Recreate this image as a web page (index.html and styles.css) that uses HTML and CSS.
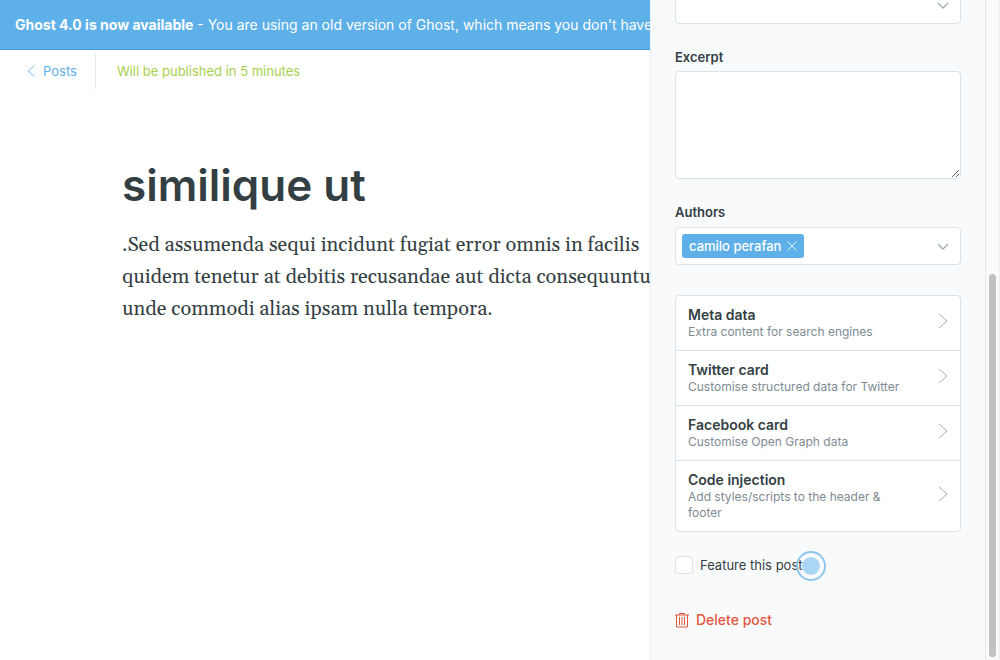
FILE: index.html
```html
<!DOCTYPE html>
<html lang="en">
<head>
<meta charset="utf-8">
<title>Edit post</title>
<link rel="stylesheet" href="styles.css">
</head>
<body>
<div class="app">
  <main class="editor">
    <aside class="alert"><strong>Ghost 4.0 is now available</strong> - You are using an old version of Ghost, which means you don't have</aside>
    <header class="toolbar">
      <a class="back" href="#">
        <svg class="back-icon" viewBox="0 0 8 12" aria-hidden="true"><path d="M7.500.5 1 6l6.500 5.500"/></svg>Posts</a>
      <span class="status">Will be published in 5 minutes</span>
    </header>
    <article class="post">
      <h1 class="post-title">similique ut</h1>
      <p class="post-body">.Sed assumenda sequi incidunt fugiat error omnis in facilis<br>quidem tenetur at debitis recusandae aut dicta consequuntur<br>unde commodi alias ipsam nulla tempora.</p>
    </article>
  </main>
  <section class="settings" aria-label="Post settings">
    <form class="settings-form">
      <button class="picker picker-tags" type="button" aria-label="Tags">
        <svg class="chevron-down" viewBox="0 0 12 7" aria-hidden="true"><path d="m1 1 5 5 5-5"/></svg>
      </button>
      <label class="label" for="excerpt">Excerpt</label>
      <textarea class="excerpt" id="excerpt"></textarea>
      <span class="label" id="authors-label">Authors</span>
      <div class="picker" role="group" aria-labelledby="authors-label">
        <span class="token">camilo perafan
          <button class="token-remove" type="button" aria-label="Remove author"><svg viewBox="0 0 10 10" aria-hidden="true"><path d="m.5.5 9 9m0-9-9 9"/></svg></button>
        </span>
        <svg class="chevron-down" viewBox="0 0 12 7" aria-hidden="true"><path d="m1 1 5 5 5-5"/></svg>
      </div>
      <ul class="nav">
        <li><button class="nav-item" type="button"><span class="nav-text"><b>Meta data</b><span>Extra content for search engines</span></span><svg class="chevron-right" viewBox="0 0 10 16" aria-hidden="true"><path d="m1 1 8 7-8 7"/></svg></button></li>
        <li><button class="nav-item" type="button"><span class="nav-text"><b>Twitter card</b><span>Customise structured data for Twitter</span></span><svg class="chevron-right" viewBox="0 0 10 16" aria-hidden="true"><path d="m1 1 8 7-8 7"/></svg></button></li>
        <li><button class="nav-item" type="button"><span class="nav-text"><b>Facebook card</b><span>Customise Open Graph data</span></span><svg class="chevron-right" viewBox="0 0 10 16" aria-hidden="true"><path d="m1 1 8 7-8 7"/></svg></button></li>
        <li><button class="nav-item" type="button"><span class="nav-text"><b>Code injection</b><span>Add styles/scripts to the header &amp; footer</span></span><svg class="chevron-right" viewBox="0 0 10 16" aria-hidden="true"><path d="m1 1 8 7-8 7"/></svg></button></li>
      </ul>
      <div class="feature">
        <input class="checkbox" type="checkbox" id="featured">
        <label for="featured">Feature this post</label>
        <span class="pointer" aria-hidden="true"></span>
      </div>
      <button class="delete" type="button">
        <svg class="trash" viewBox="0 0 14 15" aria-hidden="true"><path d="M0 2h14M4.500 2V.5h5V2M1.500 2v12h11V2M4.500 4v8M7 4v8M9.500 4v8"/></svg>Delete post</button>
    </form>
    <div class="scroll-track"><div class="scroll-thumb"></div></div>
  </section>
</div>
</body>
</html>
```
FILE: styles.css
```css
* { box-sizing: border-box; }
body {
  margin: 0;
  font: 13px/20px Inter, "Open Sans", sans-serif;
  color: #343f44;
  background: #fff;
}
button { font: inherit; color: inherit; background: none; border: 0; padding: 0; text-align: left; cursor: pointer; }
svg { display: block; fill: none; stroke: currentColor; flex: none; }
.app { display: flex; height: 100vh; overflow: hidden; }

.editor { flex: 1; min-width: 0; overflow: hidden; white-space: nowrap; }
.alert {
  height: 50px;
  padding: 15px;
  font-size: 14px;
  color: #fff;
  background: #5eb0e9;
  border-bottom: 1px solid #459bd8;
}
.alert strong { font-weight: 700; }
.toolbar { display: flex; align-items: center; padding: 3px 0 0 27px; }
.back {
  display: flex;
  align-items: center;
  gap: 8px;
  height: 36px;
  padding-right: 18px;
  border-right: 1px solid #e3e9ed;
  color: #5eb0e9;
  text-decoration: none;
}
.back-icon { width: 8px; height: 12px; opacity: .8; }
.status { padding-left: 21px; color: #a9cf4f; }
.post { padding: 67px 0 0 122px; }
.post-title { margin: 0; font-size: 44px; line-height: 58px; font-weight: 600; }
.post-body { margin: 15px 0 0; font: 20px/32px Gelasio, Georgia, "Liberation Serif", serif; }

.settings { display: flex; flex: 0 0 350px; background: #f9fafc; border-left: 1px solid #e5eff5; }
.settings-form { display: flex; flex-direction: column; flex: 1; min-width: 0; padding: 0 24px; }
.picker {
  display: flex;
  align-items: center;
  justify-content: space-between;
  flex: none;
  height: 38px;
  padding: 0 11px 0 6px;
  background: #fff;
  border: 1px solid #d9e3ea;
  border-radius: 4px;
}
.picker-tags { justify-content: flex-end; margin: -14px 0 0; }
.chevron-down { width: 12px; height: 7px; color: #9dadb7; stroke-width: 1.3; }
.label { margin: 23px 0 4px; font-weight: 600; }
.excerpt {
  height: 108px;
  background: #fff;
  border: 1px solid #d9e3ea;
  border-radius: 4px;
  resize: vertical;
  font: inherit;
}
.excerpt + .label { margin-bottom: 5px; }
.token {
  display: flex;
  align-items: center;
  gap: 6px;
  height: 24px;
  padding: 0 7px;
  font-weight: 500;
  color: #fff;
  background: #5eb0e9;
  border-radius: 3px;
}
.token-remove svg { width: 10px; height: 10px; opacity: .8; }
.nav {
  list-style: none;
  margin: 30px 0 0;
  padding: 0;
  background: #fff;
  border: 1px solid #d9e3ea;
  border-radius: 4px;
}
.nav li + li { border-top: 1px solid #d9e3ea; }
.nav-item { display: flex; align-items: center; width: 100%; padding: 10px 12px; }
.nav-text { display: flex; flex-direction: column; flex: 1; padding-right: 26px; font-size: 12px; line-height: 16px; color: #7e8b93; }
.nav-text b { font-size: 14px; line-height: 18px; font-weight: 600; color: #343f44; }
.chevron-right { width: 10px; height: 16px; margin-bottom: 4px; color: #a5b0b7; }
.feature { display: flex; align-items: center; gap: 7px; margin-top: 23px; position: relative; }
.checkbox {
  appearance: none;
  width: 18px;
  height: 18px;
  margin: 0;
  background: #fff;
  border: 1px solid #d9e3ea;
  border-radius: 4px;
}
.pointer {
  position: absolute;
  left: 121px;
  top: -4px;
  width: 30px;
  height: 30px;
  padding: 4px;
  border: 2px solid #8cc6ef;
  border-radius: 50%;
  background: rgba(158, 208, 243, .88) content-box;
}
.delete { display: flex; align-items: center; align-self: flex-start; gap: 7px; margin-top: 35px; font-size: 14px; font-weight: 500; color: #e2583e; }
.trash { width: 14px; height: 15px; }
.scroll-track { display: flex; align-items: flex-end; width: 15px; padding: 3px; background: #fafafa; border-left: 1px solid #e7e7e7; border-right: 1px solid #ededed; }
.scroll-thumb { width: 8px; height: 58.5%; border-radius: 4px; background: #c1c1c1; }
```
